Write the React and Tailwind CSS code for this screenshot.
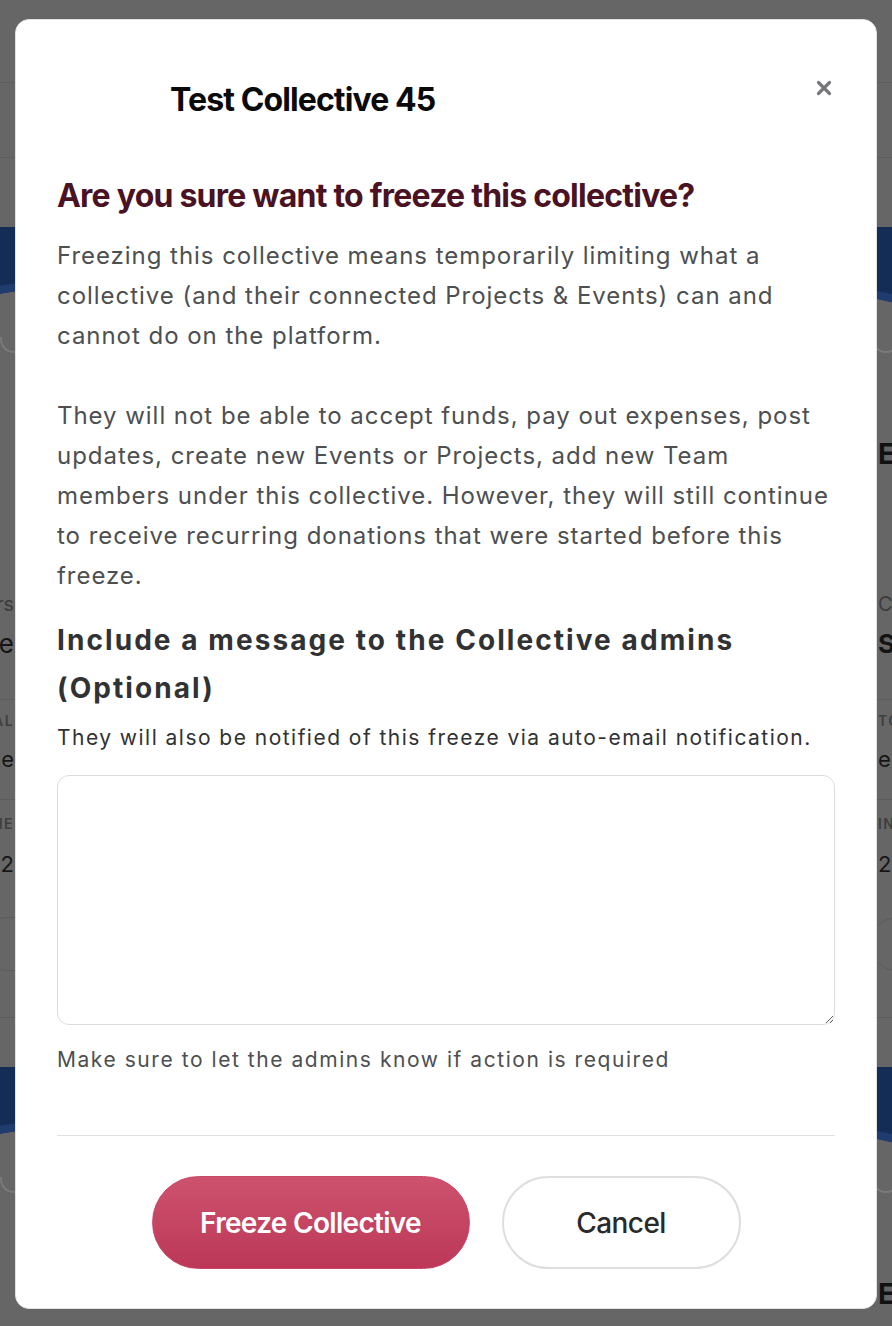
const displayFont = { fontFamily: "Inter, 'Noto Sans', sans-serif" };
const textFont = { fontFamily: "Inter, 'Noto Sans', sans-serif" };

function BackgroundCard({ side }) {
  const isRight = side === "right";
  const textAlign = isRight ? "text-left pl-[8px]" : "text-right pr-[26px]";
  return (
    <div className="flex h-[810px] flex-col" style={{ fontFamily: "Inter, sans-serif" }}>
      <div className="relative h-[110px] w-full overflow-hidden bg-[#132d57]">
        <svg className="absolute inset-0 h-full w-full" viewBox="0 0 300 110" preserveAspectRatio="none">
          <path d="M0 70 C 90 95 200 80 300 60 L300 110 L0 110 Z" fill="#666666" />
          <path d="M0 62 C 90 86 200 72 300 52 L300 60 C 200 80 90 95 0 70 Z" fill="#1e3c6e" />
        </svg>
      </div>
      <div className={`-mt-[12px] flex w-full ${isRight ? "justify-start pl-[2px]" : "justify-end pr-[12px]"}`}>
        <div className="h-[28px] w-[28px] rounded-full border-2 border-[#7a7a7a]" />
      </div>
      <p className={`mt-[83px] text-[28px] font-bold leading-[36px] text-[#121212] ${isRight ? textAlign : "invisible"}`}>
        Events
      </p>
      <p className={`mt-[118px] text-[20px] leading-[28px] text-[#3c3c3c] ${textAlign}`}>Contributors</p>
      <p className={`mt-[10px] text-[26px] leading-[32px] text-[#141414] ${isRight ? "font-bold" : ""} ${textAlign}`}>
        {isRight ? "Sponsors" : "Backers are here"}
      </p>
      <div className="mt-[39px] border-t border-[#5b5b5b]" />
      <p className={`mt-[11px] text-[14px] font-semibold leading-[20px] tracking-widest text-[#3e3e3e] ${textAlign}`}>
        TOTAL
      </p>
      <p className={`mt-[13px] text-[22px] leading-[30px] text-[#161616] ${textAlign}`}>e</p>
      <div className="mt-[25px] border-t border-[#5b5b5b]" />
      <p className={`mt-[14px] text-[14px] font-semibold leading-[20px] tracking-widest text-[#3e3e3e] ${textAlign}`}>
        INCOME
      </p>
      <p className={`mt-[15px] text-[22px] leading-[30px] text-[#161616] ${textAlign}`}>2</p>
      <div className={`mt-[38px] flex ${isRight ? "justify-start" : "justify-end"}`}>
        <div className="h-[54px] w-[60px] rounded-full border border-[#5b5b5b]" />
      </div>
      <div className="mt-[46px] border-t border-[#5b5b5b]" />
    </div>
  );
}

function CloseIcon() {
  return (
    <svg width="16" height="16" viewBox="0 0 16 16" fill="none">
      <path d="M2.5 2.5 L13.5 13.5 M13.5 2.5 L2.5 13.5" stroke="#76777a" strokeWidth="3.2" strokeLinecap="round" />
    </svg>
  );
}

export default function App() {
  return (
    <div className="relative h-[1326px] w-[892px] overflow-hidden bg-[#666666]">
      {/* page behind the overlay */}
      <div className="h-[83px] border-b border-[#5c5c5c]" />
      <div className="h-[75px] border-b border-[#5c5c5c]" />
      <div className="ml-[-300px] mt-[69px] grid w-[1470px] grid-cols-[340px_830px_300px] gap-y-[30px]">
        <BackgroundCard side="left" />
        <div />
        <BackgroundCard side="right" />
        <BackgroundCard side="left" />
        <div />
        <BackgroundCard side="right" />
      </div>

      {/* modal */}
      <div
        className="absolute left-[15px] top-[19px] w-[862px] rounded-[14px] border border-[#e2e2e2] bg-white px-[41px] pb-[39px] pt-[60px]"
        style={textFont}
      >
        <button className="absolute right-[44px] top-[60px] flex h-[16px] w-[16px] items-center justify-center">
          <CloseIcon />
        </button>

        <div className="flex items-center">
          <div className="w-[113px] shrink-0" />
          <h1
            className="text-[32px] font-bold leading-[40px] tracking-[-0.028em] text-[#0a0a0a]"
            style={displayFont}
          >
            Test Collective 45
          </h1>
        </div>

        <h2
          className="mt-[56px] text-[32px] font-bold leading-[40px] tracking-[-0.024em] text-[#4a1222]"
          style={displayFont}
        >
          Are you sure want to freeze this collective?
        </h2>

        <div className="mt-[20px] text-[24px] leading-[40px] tracking-[0.04em] text-[#4d4f51]">
          <p>
            Freezing this collective means temporarily limiting what a collective (and their connected Projects &amp;
            Events) can and cannot do on the platform.
          </p>
          <p className="mt-[40px]">
            They will not be able to accept funds, pay out expenses, post updates, create new Events or Projects, add new
            Team members under this collective. However, they will still continue to receive recurring donations that
            were started before this freeze.
          </p>
        </div>

        <h3 className="mt-[20px] text-[28px] font-bold leading-[48px] tracking-[0.074em] text-[#313233]">
          Include a message to the Collective admins (Optional)
        </h3>
        <p className="mt-[10px] text-[21px] leading-[32px] tracking-[0.07em] text-[#313233]">
          They will also be notified of this freeze via auto-email notification.
        </p>
        <textarea className="mt-[21px] block h-[250px] w-full rounded-[12px] border border-[#dcdcdc] bg-white p-3 text-[20px] outline-none" />
        <p className="mt-[19px] text-[21px] leading-[32px] tracking-[0.074em] text-[#4d4f51]">
          Make sure to let the admins know if action is required
        </p>

        <div className="mt-[59px] border-t border-[#e1e1e1]" />

        <div className="mt-[40px] flex justify-center gap-[32px]" style={displayFont}>
          <button className="h-[93px] w-[318px] rounded-full border border-[#c9486a] bg-gradient-to-b from-[#cd526d] to-[#bc3758] text-[28px] font-semibold tracking-[-0.025em] text-white">
            Freeze Collective
          </button>
          <button className="h-[93px] w-[239px] rounded-full border-2 border-[#dedede] bg-white text-[28px] font-medium tracking-[-0.02em] text-[#2a2a2a]">
            Cancel
          </button>
        </div>
      </div>
    </div>
  );
}
